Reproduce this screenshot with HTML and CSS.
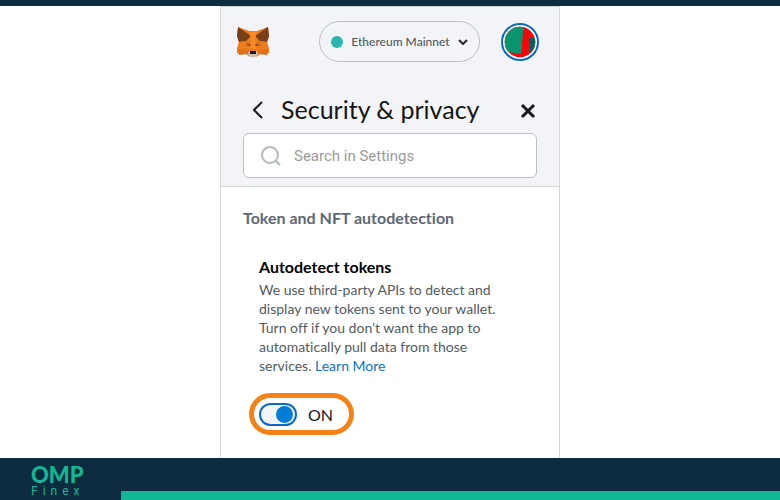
FILE: index.html
```html
<!DOCTYPE html>
<html lang="en">
<head>
<meta charset="utf-8">
<meta name="viewport" content="width=device-width, initial-scale=1">
<title>Security &amp; privacy</title>
<link rel="stylesheet" href="styles.css">
</head>
<body>
<main class="panel">
  <header class="head">
    <div class="topbar">
      <svg class="fox" viewBox="0 0 32 32" aria-hidden="true">
        <path fill="#e8791f" d="M1 1l11 4h8l11-4 1 9-2 7 2 6-2 6-7-1-4 3h-6l-4-3-7 1-2-6 2-6-2-7z"/>
        <path fill="#783f18" d="M1 1l13 9-5 5-7 1-2-6zM31 1L18 10l5 5 7 1 2-6z"/>
        <path fill="#f38a22" d="M12 5h8l-2 9 2 9h-8l2-9z"/>
        <path fill="#ee7d1c" d="M2 16l7-1 4 8-3 4H0v-4zM30 16l-7-1-4 8 3 4h10v-4z"/>
        <path fill="#c85e18" d="M9 15l5 4-6 1zM23 15l-5 4 6 1zM0 23l10 1 1 4-9 1zM32 23l-10 1-1 4 9 1z" opacity=".4"/>
        <path fill="#7a4521" d="M9 19l4-1 1 2zM23 19l-4-1-1 2z"/>
        <path fill="#cbbdb0" d="M12 25h8l1 3-2 3h-6l-2-3z"/>
        <path fill="#17171a" d="M13 25h6v3h-6z"/>
      </svg>
      <button class="network" type="button">
        <span class="dot"></span>
        <span>Ethereum Mainnet</span>
        <svg class="chevron" viewBox="0 0 10 6" aria-hidden="true"><path d="M1 1l4 4 4-4"/></svg>
      </button>
      <button class="account" type="button" aria-label="Account">
        <svg viewBox="0 0 38 38" aria-hidden="true">
          <clipPath id="disc"><circle cx="19" cy="19" r="15.3"/></clipPath>
          <circle cx="19" cy="19" r="18" fill="#fff" stroke="#0b69c7" stroke-width="2"/>
          <g clip-path="url(#disc)">
            <path fill="#f90509" d="M0 0h38v38H0z"/>
            <path fill="#07946f" d="M0 0h23l-3 31-20-3z"/>
            <path fill="#075f5e" d="M29 15h9v12l-9 4z"/>
          </g>
        </svg>
      </button>
    </div>
    <div class="title">
      <button class="icon back" type="button" aria-label="Back"><svg viewBox="0 0 12 18"><path d="M10 1L2 9l8 8"/></svg></button>
      <h1>Security &amp; privacy</h1>
      <button class="icon close" type="button" aria-label="Close"><svg viewBox="0 0 16 16"><path d="M2 2l12 12M14 2L2 14"/></svg></button>
    </div>
    <label class="search">
      <svg viewBox="0 0 20 20" aria-hidden="true"><circle cx="9" cy="9" r="8"/><path d="M15 15l4 4"/></svg>
      <input type="search" placeholder="Search in Settings" aria-label="Search in Settings">
    </label>
  </header>
  <section class="settings">
    <h2>Token and NFT autodetection</h2>
    <div class="setting">
      <h3 id="autodetect">Autodetect tokens</h3>
      <p>We use third-party APIs to detect and display new tokens sent to your wallet. Turn off if you don’t want the app to automatically pull data from those services. <a href="#">Learn More</a></p>
      <label class="toggle">
        <input type="checkbox" role="switch" aria-labelledby="autodetect" checked>
        <span>ON</span>
      </label>
    </div>
  </section>
</main>
<footer class="footer">
  <div class="brand"><strong>OMP</strong><span>Finex</span></div>
  <div class="stripe"></div>
</footer>
</body>
</html>
```
FILE: styles.css
```css
* { box-sizing: border-box; }
body {
  margin: 0;
  min-height: 100vh;
  display: flex;
  flex-direction: column;
  border-top: 6px solid #0d2c40;
  background: #fff;
  color: #24272a;
  font-family: Lato, "Liberation Sans", sans-serif;
  font-variant-ligatures: none;
}
h1, h2, h3, p { margin: 0; }
button { padding: 0; border: 0; background: none; color: inherit; font: inherit; }
svg { display: block; fill: none; }
.panel {
  flex: 1;
  width: 100%;
  max-width: 340px;
  margin: 0 auto;
  border: 1px solid #d5d8db;
  border-bottom: 0;
}
.head {
  padding: 14px 22px 8px;
  border-bottom: 1px solid #d5d8db;
  background: #f2f4f7;
}
.topbar { display: flex; align-items: center; margin: 0 -2px 0 -6px; }
.fox { width: 32px; height: 32px; }
.network {
  display: flex;
  align-items: center;
  justify-content: space-between;
  width: 161px;
  height: 41px;
  margin-left: auto;
  padding: 0 11px;
  border: 1px solid #bbc0c5;
  border-radius: 24px;
  color: #535a61;
  font-size: 12px;
  font-weight: 500;
}
.dot { width: 12px; height: 12px; border-radius: 50%; background: #29b6af; }
.chevron { width: 10px; height: 6px; stroke: #24272a; stroke-width: 2; }
.account { width: 38px; height: 38px; margin-left: 21px; }
.title { display: flex; align-items: center; padding: 32px 0 8px 9px; }
.title h1 { margin-left: 17px; color: #141618; font-size: 25px; line-height: 31px; font-weight: 400; }
.icon svg { stroke: #141618; }
.back svg { width: 12px; height: 18px; stroke-width: 2; }
.close { margin: 3px 1px 0 auto; }
.close svg { width: 16px; height: 16px; stroke-width: 3; }
.search {
  display: flex;
  align-items: center;
  gap: 13px;
  height: 45px;
  padding: 0 17px;
  border: 1px solid #bbc0c5;
  border-radius: 6px;
  background: #fff;
}
.search svg { flex: none; width: 20px; height: 20px; stroke: #b0b7bd; stroke-width: 2; }
.search input {
  flex: 1;
  min-width: 0;
  padding: 0;
  border: 0;
  outline: 0;
  background: none;
  font: 15px/20px Roboto, sans-serif;
}
.search input::placeholder { color: #9b9b9b; }
.settings { padding: 21px 22px 16px; }
h2 { color: #5d6875; font-size: 16px; line-height: 20px; font-weight: 700; }
.setting { padding: 28px 0 0 16px; }
h3 { color: #000; font-size: 16px; line-height: 22px; font-weight: 700; }
.setting p { max-width: 246px; padding-top: 2px; color: #535a61; font-size: 14px; line-height: 19px; }
.setting a { color: #0b72cc; text-decoration: none; }
.toggle {
  display: inline-flex;
  align-items: center;
  gap: 11px;
  height: 42px;
  margin: 18px 0 0 -10px;
  padding: 0 16px 0 5px;
  border: 5px solid #f58216;
  border-radius: 21px;
  color: #141618;
  font-size: 16px;
}
.toggle input {
  appearance: none;
  display: flex;
  align-items: center;
  justify-content: flex-end;
  width: 38px;
  height: 23px;
  margin: 0;
  padding: 0 2px;
  border: 2px solid #0b69c7;
  border-radius: 12px;
  background: #f2f4f6;
}
.toggle input:not(:checked) { justify-content: flex-start; }
.toggle input::before { content: ""; width: 17px; height: 17px; border-radius: 50%; background: #037dd6; }
.footer { display: flex; align-items: flex-end; height: 42px; background: #0d2c40; }
.brand { align-self: flex-start; width: 121px; padding: 7px 0 0 31px; color: #12b896; }
.brand strong { display: block; font-size: 22px; line-height: 20px; font-weight: 900; }
.brand span { display: block; font: 12px/12px Roboto, sans-serif; letter-spacing: 5px; }
.stripe { flex: 1; height: 9px; background: #12b896; }
```
